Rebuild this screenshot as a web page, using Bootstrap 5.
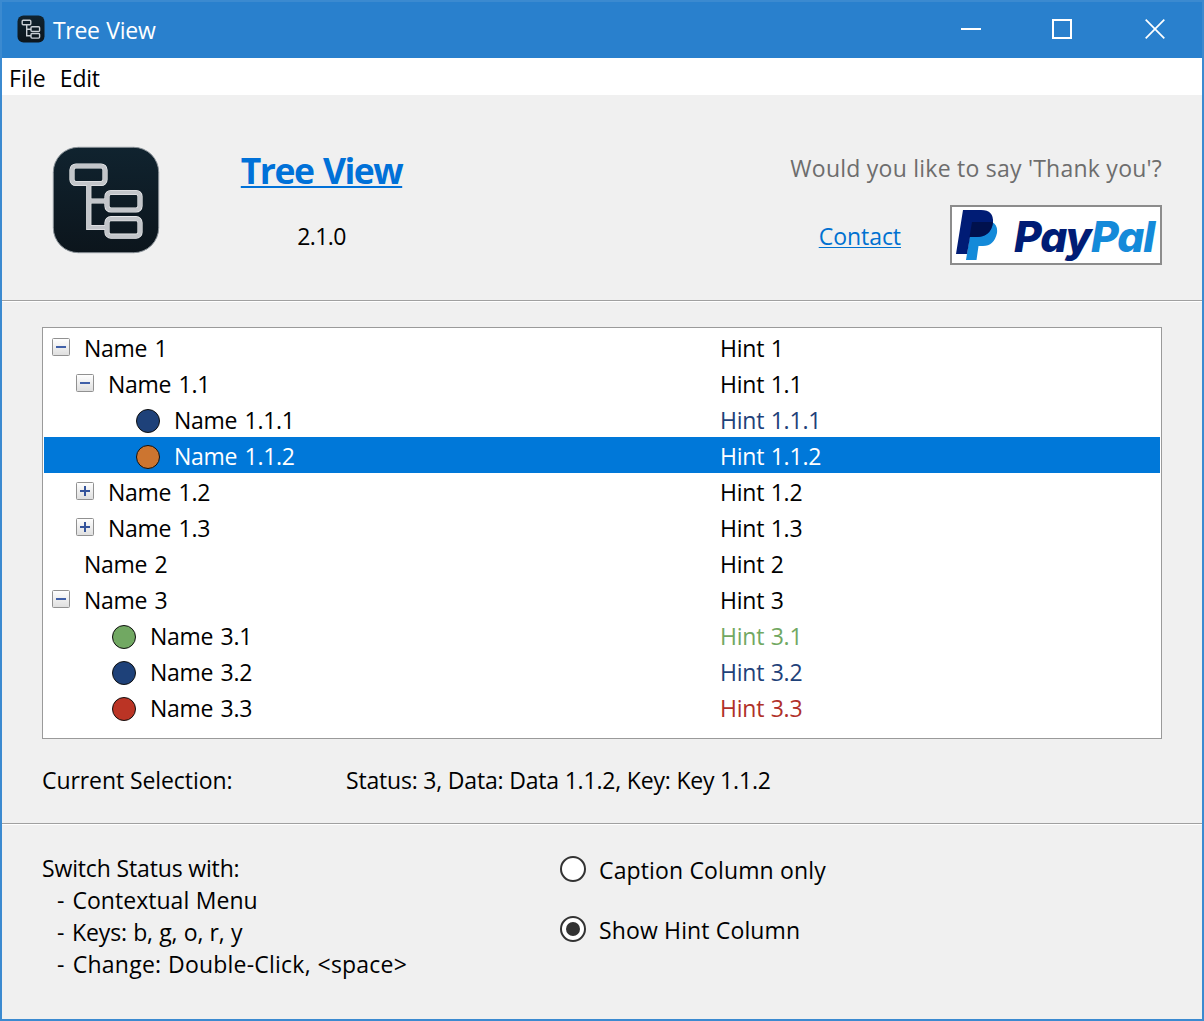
<!DOCTYPE html>
<html lang="en">
<head>
<meta charset="utf-8">
<meta name="viewport" content="width=device-width, initial-scale=1">
<title>Tree View</title>
<link href="https://cdn.jsdelivr.net/npm/bootstrap@5.3.0/dist/css/bootstrap.min.css" rel="stylesheet">
<style>
body{font-family:"Open Sans","Noto Sans",sans-serif;font-size:23px;line-height:32px;color:#000;background:#f0f0f0;overflow:hidden}
.win{width:1204px;height:1021px;border:2px solid #3b8ad0;background:#f0f0f0;white-space:nowrap}
.titlebar{height:56px;background:#2980cd;color:#fff;padding-left:15px}
.titlebar .logo{margin-top:-3px}
.titlebar .caption{margin-left:8px;letter-spacing:-.3px;word-spacing:1px}
.winbtns{padding-right:1px}
.winbtn{width:92px;height:56px;padding:0 0 2px;border:0;background:none;line-height:0}
.winbtn.max{padding-right:2px}
.menubar{height:37px;background:#fff;padding:3px 0 0 7px;gap:14px}
.menubar a{color:#000;text-decoration:none;line-height:34px;letter-spacing:.1px}
.menubar .m-edit{letter-spacing:-.2px}
.head{height:205px;padding:49px 40px 0 50px}
.head .appicon{margin-top:2px}
.head .namecol{margin-left:80px;width:163px}
.apptitle{font-size:35.5px;font-weight:700;line-height:50px;padding-top:1px;height:48px;color:#0071d8;text-decoration:underline;text-decoration-thickness:2px;text-underline-offset:2px;text-decoration-skip-ink:none;letter-spacing:-1.5px;word-spacing:1.8px}
.version{margin-top:28px;letter-spacing:-.6px}
.thanks{padding-top:8px;color:#6d6d6d;letter-spacing:.24px;line-height:32px;height:40px}
.payrow{margin-top:21px;gap:49px}
.contact{color:#0071d0;text-decoration-thickness:1px;text-underline-offset:2px;padding-top:2px;letter-spacing:-.05px}
.paybox{width:212px;height:60px;border:2px solid #8c8c8c;background:#fff;padding-left:4px}
.wordmark{font-family:Inter,sans-serif;font-style:italic;font-weight:800;font-size:42.5px;line-height:56px;letter-spacing:-1px;color:#001c75;margin-left:16px;padding-top:3px}
.wordmark span{color:#148ad9}
.rule{height:2px;border-top:1px solid #a0a0a0;background:#fff}
.tree{margin:25px 40px 0;height:412px;border:1px solid #9a9a9a;background:#fff;padding:1px}
.trow{height:36px;line-height:36px;padding-left:8px;letter-spacing:-.2px;word-spacing:.6px}
.trow.active{background:#0078d9;color:#fff}
.cap{width:668px;letter-spacing:-.28px;word-spacing:1.7px}
.trow p{margin:0;padding-top:1px}
.lv1{padding-left:24px}.lv2{padding-left:84px}.lv2b{padding-left:60px}
.box{width:18px;height:18px;margin-right:14px;margin-top:-1px}
.dot{width:24px;height:24px;border:1.5px solid #101010;border-radius:50%;margin-right:14px;margin-top:3px}
.c-blue{background:#1e4179}.c-orange{background:#cc7530}.c-green{background:#71a862}.c-red{background:#bb3425}
.t-blue{color:#1e4179}.t-green{color:#71a862}.t-red{color:#b03029}
.status{margin:25px 40px 0;height:59px}
.status .k{width:304px;letter-spacing:-.08px}
.status .v{letter-spacing:-.19px}
.foot{padding:27px 40px 0}
.notes{width:518px}
.notes .n0{letter-spacing:-.15px}
.notes .i{padding-left:15px;word-spacing:.5px;letter-spacing:.03px}
.notes .n2{letter-spacing:-.15px}
.notes .n3{letter-spacing:.22px}
.notes b{font-weight:400;margin-right:1.5px}
.radio{width:26px;height:26px;border:2px solid #333;border-radius:50%;background:#fff;margin-right:13px}
.radio.on::after{content:"";display:block;width:14px;height:14px;margin:4px;border-radius:50%;background:#333}
.opt{height:26px;margin-bottom:34px}
.opt label{padding-top:2px;letter-spacing:.14px}
</style>
</head>
<body>
<svg width="0" height="0" class="position-absolute"><defs><linearGradient id="dk" x2="0" y2="1"><stop stop-color="#10232f"/><stop offset="1" stop-color="#0c151c"/></linearGradient><linearGradient id="bx" x2="0" y2="1"><stop stop-color="#fff"/><stop offset="1" stop-color="#dedede"/></linearGradient>
<g id="nodes"><path d="M36.800 38V81.500H55M36.800 55H55"/><rect x="20" y="20" width="33" height="17.500" rx="4"/><rect x="55" y="46.500" width="33" height="17.500" rx="4"/><rect x="55" y="72.700" width="33" height="17.500" rx="4"/></g>
<symbol id="minus" viewBox="0 0 18 18"><rect x=".5" y=".5" width="17" height="17" rx="1" fill="url(#bx)" stroke="#919191"/><path d="M4 9H14" stroke="#4060a8" stroke-width="2"/></symbol>
<symbol id="plus" viewBox="0 0 18 18"><rect x=".5" y=".5" width="17" height="17" rx="1" fill="url(#bx)" stroke="#919191"/><path d="M4 9H14M9 4V14" stroke="#35549b" stroke-width="2"/></symbol></defs></svg>
<div class="win">
<header class="titlebar d-flex align-items-center">
<svg class="logo" width="28" height="28" viewBox="0 0 28 28"><rect x=".5" y=".5" width="27" height="27" rx="6" fill="url(#dk)"/><g fill="none" stroke="#c9d0d6" stroke-width="1.400"><rect x="5.200" y="5.200" width="8.600" height="4.600" rx="1"/><rect x="14" y="11.800" width="8.600" height="4.600" rx="1"/><rect x="14" y="18.500" width="8.600" height="4.600" rx="1"/><path d="M9.700 10V20.700H14M9.700 14.200H14"/></g></svg>
<span class="caption">Tree View</span>
<div class="winbtns ms-auto d-flex">
<button class="winbtn" aria-label="Minimize"><svg width="20" height="20"><path d="M0 10H20" stroke="#fff" stroke-width="2"/></svg></button>
<button class="winbtn max" aria-label="Maximize"><svg width="20" height="20"><rect x="1" y="1" width="18" height="18" fill="none" stroke="#fff" stroke-width="2"/></svg></button>
<button class="winbtn" aria-label="Close"><svg width="20" height="20"><path d="M.7 .7L19.300 19.300M19.300 .7L.7 19.300" stroke="#fff" stroke-width="1.700"/></svg></button>
</div>
</header>
<nav class="menubar d-flex"><a href="#">File</a><a href="#" class="m-edit">Edit</a></nav>
<section class="head d-flex">
<svg class="appicon" width="108" height="108" viewBox="0 0 108 108"><rect x="1.300" y="1.300" width="105.400" height="105.400" rx="25" fill="url(#dk)" stroke="#8a9298"/><g fill="none" stroke="#f4f5f6" stroke-width="5.200"><use href="#nodes"/></g><g fill="none" stroke="#c3c6ca" stroke-width="4"><use href="#nodes"/></g></svg>
<div class="namecol text-center"><a href="#" class="apptitle d-block">Tree View</a><div class="version">2.1.0</div></div>
<div class="ms-auto text-end"><div class="thanks">Would you like to say 'Thank you'?</div>
<div class="payrow d-flex align-items-center justify-content-end"><a href="#" class="contact">Contact</a>
<div class="paybox d-flex align-items-center">
<svg width="42" height="52" viewBox="0 0 42 52"><path d="M16 13H36Q42 16 41 24Q38 37 27 37H22.500L20.500 51H10Z" fill="#148ad9"/><path d="M7 1H25Q38 1 37 14Q35 28 20 28H14L11 45H0Z" fill="#001c75"/><path d="M16 13H36.800Q35 28 20 28H13.500Z" fill="#00114d"/></svg>
<span class="wordmark">Pay<span>Pal</span></span></div></div></div>
</section>
<div class="rule"></div>
<main class="tree">
<div class="trow d-flex"><div class="cap d-flex align-items-center"><svg class="box"><use href="#minus"/></svg><p>Name 1</p></div><p>Hint 1</p></div>
<div class="trow d-flex"><div class="cap d-flex align-items-center lv1"><svg class="box"><use href="#minus"/></svg><p>Name 1.1</p></div><p>Hint 1.1</p></div>
<div class="trow d-flex"><div class="cap d-flex align-items-center lv2"><i class="dot c-blue"></i><p>Name 1.1.1</p></div><p class="t-blue">Hint 1.1.1</p></div>
<div class="trow active d-flex"><div class="cap d-flex align-items-center lv2"><i class="dot c-orange"></i><p>Name 1.1.2</p></div><p>Hint 1.1.2</p></div>
<div class="trow d-flex"><div class="cap d-flex align-items-center lv1"><svg class="box"><use href="#plus"/></svg><p>Name 1.2</p></div><p>Hint 1.2</p></div>
<div class="trow d-flex"><div class="cap d-flex align-items-center lv1"><svg class="box"><use href="#plus"/></svg><p>Name 1.3</p></div><p>Hint 1.3</p></div>
<div class="trow d-flex"><div class="cap d-flex align-items-center"><i class="box"></i><p>Name 2</p></div><p>Hint 2</p></div>
<div class="trow d-flex"><div class="cap d-flex align-items-center"><svg class="box"><use href="#minus"/></svg><p>Name 3</p></div><p>Hint 3</p></div>
<div class="trow d-flex"><div class="cap d-flex align-items-center lv2b"><i class="dot c-green"></i><p>Name 3.1</p></div><p class="t-green">Hint 3.1</p></div>
<div class="trow d-flex"><div class="cap d-flex align-items-center lv2b"><i class="dot c-blue"></i><p>Name 3.2</p></div><p class="t-blue">Hint 3.2</p></div>
<div class="trow d-flex"><div class="cap d-flex align-items-center lv2b"><i class="dot c-red"></i><p>Name 3.3</p></div><p class="t-red">Hint 3.3</p></div>
</main>
<div class="status d-flex"><div class="k">Current Selection:</div><div class="v">Status: 3, Data: Data 1.1.2, Key: Key 1.1.2</div></div>
<div class="rule"></div>
<footer class="foot d-flex">
<div class="notes"><div class="n0">Switch Status with:</div><div class="i"><b>-</b> Contextual Menu</div><div class="i n2"><b>-</b> Keys: b, g, o, r, y</div><div class="i n3"><b>-</b> Change: Double-Click, &lt;space&gt;</div></div>
<div class="pt-1"><div class="opt d-flex align-items-center"><i class="radio"></i><label>Caption Column only</label></div><div class="opt d-flex align-items-center"><i class="radio on"></i><label>Show Hint Column</label></div></div>
</footer>
</div>
<script src="https://cdn.jsdelivr.net/npm/bootstrap@5.3.0/dist/js/bootstrap.bundle.min.js"></script>
</body>
</html>
